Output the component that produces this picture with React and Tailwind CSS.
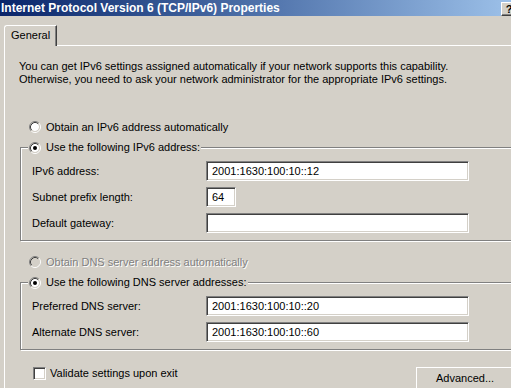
import React from 'react';

const FACE = '#d4d0c8';

const Radio = ({ checked, disabled }) => (
  <svg width="12" height="12" viewBox="0 0 12 12" className="shrink-0">
    <circle cx="6" cy="6" r="4" fill={disabled ? FACE : '#fff'} />
    <path d="M2.11 9.89A5.5 5.5 0 0 1 9.89 2.11" fill="none" stroke="#808080" />
    <path d="M9.89 2.11A5.5 5.5 0 0 1 2.11 9.89" fill="none" stroke="#fff" />
    <path d="M2.82 9.18A4.5 4.5 0 0 1 9.18 2.82" fill="none" stroke="#404040" />
    <path d="M9.18 2.82A4.5 4.5 0 0 1 2.82 9.18" fill="none" stroke={FACE} />
    {checked && <circle cx="6" cy="6" r="2" fill="#000" />}
  </svg>
);

const RadioRow = ({ checked, disabled, children }) => (
  <div className="flex items-center gap-[5px] h-[14px]">
    <Radio checked={checked} disabled={disabled} />
    <span
      className={
        disabled
          ? 'text-[#808080] [text-shadow:1px_1px_0_#fff]'
          : 'text-black'
      }
    >
      {children}
    </span>
  </div>
);

const Field = ({ label, value, width = 'w-[263px]' }) => (
  <div className="flex items-center">
    <span className="w-[174px] shrink-0">{label}</span>
    <input
      readOnly
      value={value}
      className={`${width} h-[20px] bg-white pl-[5px] text-[11px] text-black outline-none border border-t-[#808080] border-l-[#808080] border-b-white border-r-white shadow-[inset_1px_1px_0_#404040,inset_-1px_-1px_0_#d4d0c8] font-['Liberation_Sans',Arial,sans-serif]`}
    />
  </div>
);

const GroupBox = ({ title, children }) => (
  <fieldset className="ml-[1px] mr-[16px] p-0 pt-[7px] pb-[7px] border border-[#808080] shadow-[1px_1px_0_#fff,inset_1px_1px_0_#fff]">
    <legend className="ml-[7px] px-[1px] bg-[#d4d0c8] leading-[13px]">
      <span className="flex items-center gap-[5px]">
        <Radio checked />
        <span>{title}</span>
      </span>
    </legend>
    <div className="flex flex-col gap-[6px] pl-[11px]">{children}</div>
  </fieldset>
);

const CaptionButton = ({ children }) => (
  <div className="w-[16px] h-[14px] bg-[#d4d0c8] border border-t-white border-l-white border-b-[#404040] border-r-[#404040] shadow-[inset_-1px_-1px_0_#808080] flex items-center justify-center text-[11px] font-bold text-black leading-none">
    {children}
  </div>
);

export default function App() {
  return (
    <div className="w-[511px] h-[388px] overflow-hidden bg-[#d4d0c8] font-['Liberation_Sans',Arial,sans-serif] text-[11px] leading-[13px] text-black">
      <div className="w-[540px]">
        {/* Title bar */}
        <div className="h-[16px] flex bg-linear-to-r from-[#0a246a] to-[#a6caf0]">
          <span className="pl-[1px] text-[12px] leading-[16px] font-bold text-white whitespace-nowrap">
            Internet Protocol Version 6 (TCP/IPv6) Properties
          </span>
          <div className="ml-auto mr-[5px] pt-[2px] flex gap-[2px]">
            <CaptionButton>?</CaptionButton>
            <CaptionButton>×</CaptionButton>
          </div>
        </div>

        {/* Tab strip */}
        <div className="mt-[9px] flex">
          <div className="relative z-10 -mb-[1px] ml-[4px] w-[53px] h-[21px] bg-[#d4d0c8] border-t border-l border-white border-r border-r-[#404040] rounded-tl-[3px] shadow-[inset_-1px_0_0_#808080] pl-[6px] pt-[3px]">
            General
          </div>
        </div>

        {/* Panel */}
        <div className="ml-[4px] w-[530px] h-[400px] border-t border-l border-white pl-[14px] pt-[14px]">
          <p>
            You can get IPv6 settings assigned automatically if your network supports this capability.
            <br />
            Otherwise, you need to ask your network administrator for the appropriate IPv6 settings.
          </p>

          <div className="mt-[34px] ml-[10px]">
            <RadioRow>Obtain an IPv6 address automatically</RadioRow>
          </div>

          <div className="mt-[7px]">
            <GroupBox title="Use the following IPv6 address:">
              <Field label="IPv6 address:" value="2001:1630:100:10::12" />
              <Field label="Subnet prefix length:" value="64" width="w-[30px]" />
              <Field label="Default gateway:" value="" />
            </GroupBox>
          </div>

          <div className="mt-[14px] ml-[10px]">
            <RadioRow disabled>Obtain DNS server address automatically</RadioRow>
          </div>

          <div className="mt-[7px]">
            <GroupBox title="Use the following DNS server addresses:">
              <Field label="Preferred DNS server:" value="2001:1630:100:10::20" />
              <Field label="Alternate DNS server:" value="2001:1630:100:10::60" />
            </GroupBox>
          </div>

          <div className="mt-[17px] flex items-start">
            <div className="ml-[14px] flex items-center gap-[4px] h-[13px]">
              <div className="w-[13px] h-[13px] bg-white border border-t-[#808080] border-l-[#808080] border-b-white border-r-white shadow-[inset_1px_1px_0_#404040,inset_-1px_-1px_0_#d4d0c8]" />
              <span>Validate settings upon exit</span>
            </div>
            <button className="ml-auto mr-[20px] w-[98px] h-[23px] bg-[#d4d0c8] border border-t-white border-l-white border-b-[#404040] border-r-[#404040] shadow-[inset_-1px_-1px_0_#808080] flex items-center justify-center text-[11px] text-black">
              Advanced...
            </button>
          </div>
        </div>
      </div>
    </div>
  );
}
